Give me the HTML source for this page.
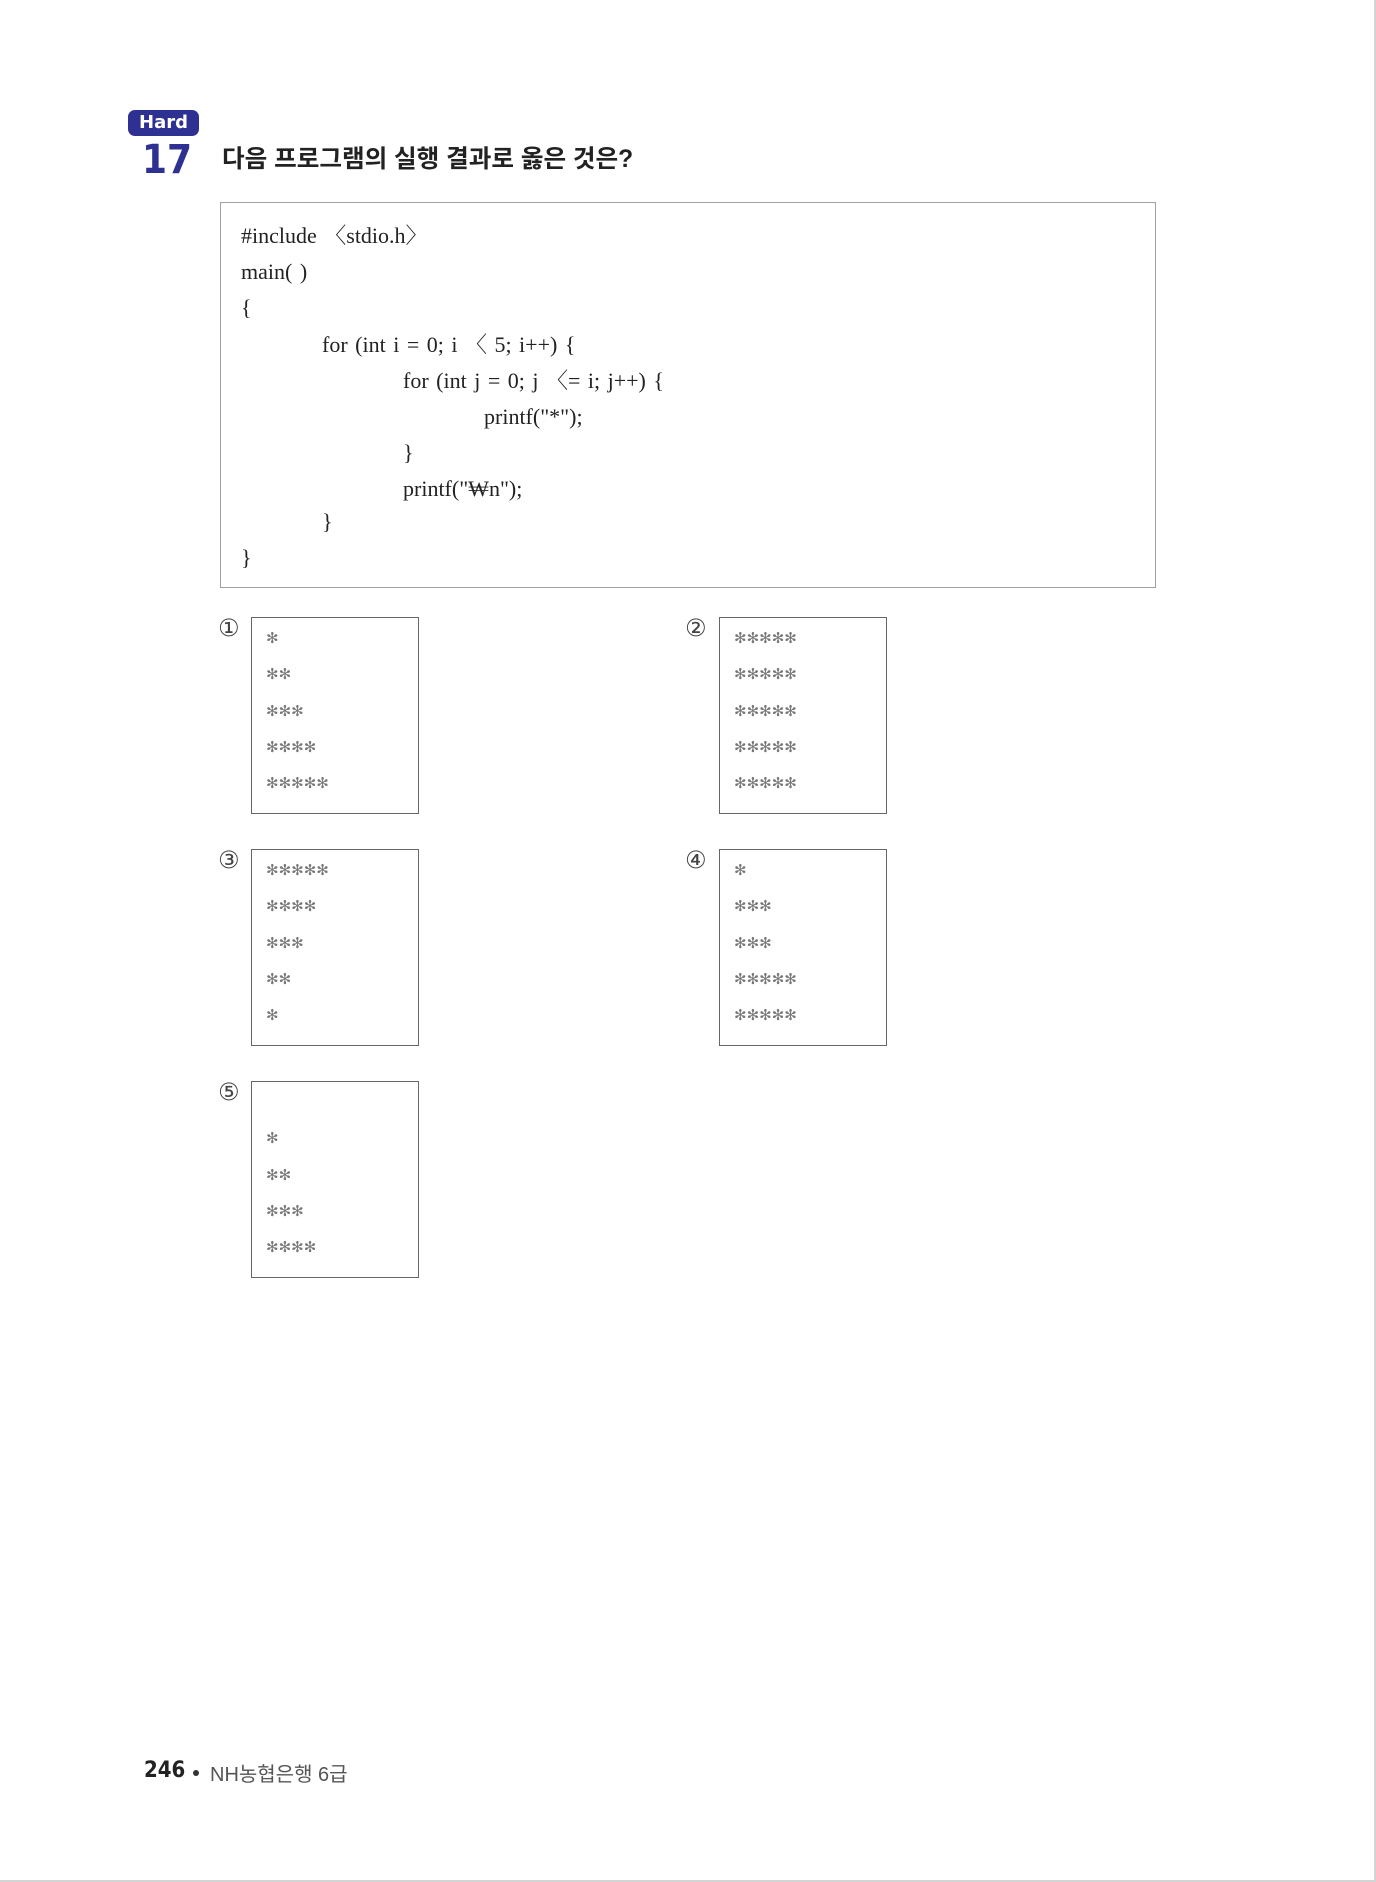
<!DOCTYPE html>
<html><head><meta charset="utf-8"><style>
body{margin:0;background:#fff;}
.page{position:relative;width:1376px;height:1882px;background:#fff;overflow:hidden;font-family:"Liberation Serif","Noto Serif CJK SC",serif;}
.rb{position:absolute;right:0;top:0;width:2px;height:1882px;background:#d4d4d4;}
.bb{position:absolute;left:0;bottom:0;width:1376px;height:2px;background:#d4d4d4;}
.hard{position:absolute;left:128px;top:110px;width:71px;height:26px;background:#2e3192;border-radius:7px;color:#fff;font:bold 18px "DejaVu Sans","Liberation Sans",sans-serif;text-align:center;line-height:26px;}
.num{position:absolute;left:142px;top:138px;font:bold 40px "DejaVu Sans Condensed","Liberation Sans Narrow","Liberation Sans",sans-serif;color:#2e3192;line-height:44px;}
.q{position:absolute;left:222px;top:145px;font:bold 24.6px "Liberation Sans","Noto Sans CJK KR",sans-serif;color:#222;line-height:30px;}
.code{position:absolute;left:220px;top:202px;width:936px;height:386px;border:1.5px solid #a0a0a0;box-sizing:border-box;}
.cl{position:absolute;font-size:22px;color:#222;line-height:26px;white-space:pre;word-spacing:2px;}
.ob{position:absolute;width:168px;height:197px;border:1.5px solid #666;box-sizing:border-box;}
.cn{position:absolute;font:24px "Liberation Serif","DejaVu Sans",serif;color:#444;}
.st{position:absolute;left:14px;font:15px "DejaVu Sans",sans-serif;color:#777;letter-spacing:0px;line-height:16px;}
.foot{position:absolute;left:144px;top:1758px;font:bold 22px "DejaVu Sans Condensed","Liberation Sans",sans-serif;color:#222;}
.bul{position:absolute;left:193px;top:1770px;width:6px;height:6px;border-radius:50%;background:#333;}
.foot2{position:absolute;left:210px;top:1758px;font:20px "Liberation Sans","Noto Sans CJK KR",sans-serif;color:#555;}
</style></head><body><div class="page">
<div class="rb"></div><div class="bb"></div>
<div class="hard">Hard</div>
<div class="num">17</div>
<div class="q">다음 프로그램의 실행 결과로 옳은 것은?</div>
<div class="code">
<div class="cl" style="left:20px;top:20px">#include 〈stdio.h〉</div>
<div class="cl" style="left:20px;top:56px">main( )</div>
<div class="cl" style="left:20px;top:92px">{</div>
<div class="cl" style="left:101px;top:129px">for (int i = 0; i 〈 5; i++) {</div>
<div class="cl" style="left:182px;top:165px">for (int j = 0; j 〈= i; j++) {</div>
<div class="cl" style="left:263px;top:201px">printf("*");</div>
<div class="cl" style="left:182px;top:237px">}</div>
<div class="cl" style="left:182px;top:273px">printf("₩n");</div>
<div class="cl" style="left:101px;top:306px">}</div>
<div class="cl" style="left:20px;top:342px">}</div>
</div>

<div class="cn" style="left:218px;top:614px">①</div>
<div class="ob" style="left:251px;top:617px">
<div class="st" style="top:12px">✻</div><div class="st" style="top:48px">✻✻</div><div class="st" style="top:85px">✻✻✻</div><div class="st" style="top:121px">✻✻✻✻</div><div class="st" style="top:157px">✻✻✻✻✻</div></div>

<div class="cn" style="left:685px;top:614px">②</div>
<div class="ob" style="left:719px;top:617px">
<div class="st" style="top:12px">✻✻✻✻✻</div><div class="st" style="top:48px">✻✻✻✻✻</div><div class="st" style="top:85px">✻✻✻✻✻</div><div class="st" style="top:121px">✻✻✻✻✻</div><div class="st" style="top:157px">✻✻✻✻✻</div></div>

<div class="cn" style="left:218px;top:846px">③</div>
<div class="ob" style="left:251px;top:849px">
<div class="st" style="top:12px">✻✻✻✻✻</div><div class="st" style="top:48px">✻✻✻✻</div><div class="st" style="top:85px">✻✻✻</div><div class="st" style="top:121px">✻✻</div><div class="st" style="top:157px">✻</div></div>

<div class="cn" style="left:685px;top:846px">④</div>
<div class="ob" style="left:719px;top:849px">
<div class="st" style="top:12px">✻</div><div class="st" style="top:48px">✻✻✻</div><div class="st" style="top:85px">✻✻✻</div><div class="st" style="top:121px">✻✻✻✻✻</div><div class="st" style="top:157px">✻✻✻✻✻</div></div>

<div class="cn" style="left:218px;top:1078px">⑤</div>
<div class="ob" style="left:251px;top:1081px">
<div class="st" style="top:48px">✻</div><div class="st" style="top:85px">✻✻</div><div class="st" style="top:121px">✻✻✻</div><div class="st" style="top:157px">✻✻✻✻</div></div>

<div class="foot">246</div>
<div class="bul"></div>
<div class="foot2">NH농협은행 6급</div>
</div></body></html>
